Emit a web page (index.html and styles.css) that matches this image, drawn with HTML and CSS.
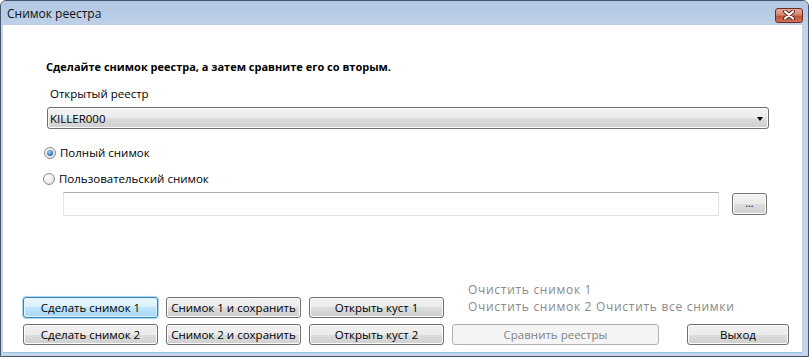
FILE: index.html
```html
<!DOCTYPE html>
<html>
<head>
    <title>Снимок реестра</title>
    <link rel="stylesheet" href="styles.css">
</head>
<body>
    <div class="window">
        <div class="titlebar">
            <span class="title">Снимок реестра</span>
            <span class="close">
                <svg width="14" height="10" viewBox="0 0 14 10">
                    <path d="M3 1.5 L11 8.5 M11 1.5 L3 8.5" stroke="#5a2318" stroke-width="4" stroke-linecap="round"/>
                    <path d="M3 1.5 L11 8.5 M11 1.5 L3 8.5" stroke="#ffffff" stroke-width="2.2" stroke-linecap="round"/>
                </svg>
            </span>
        </div>
        <div class="client">
            <div class="intro">Сделайте снимок реестра, а затем сравните его со вторым.</div>
            <div class="label">Открытый реестр</div>
            <div class="combo">
                <span>KILLER000</span>
                <span class="arrow"></span>
            </div>
            <div class="radio-row first"><span class="radio checked"></span>Полный снимок</div>
            <div class="radio-row second"><span class="radio"></span>Пользовательский снимок</div>
            <div class="path-row">
                <div class="textbox"></div>
                <div class="btn browse">...</div>
            </div>
            <div class="spacer"></div>
            <div class="bottom">
                <div class="btn-grid">
                    <div class="btn focused">Сделать снимок 1</div>
                    <div class="btn">Снимок 1 и сохранить</div>
                    <div class="btn">Открыть куст 1</div>
                    <div class="btn">Сделать снимок 2</div>
                    <div class="btn">Снимок 2 и сохранить</div>
                    <div class="btn">Открыть куст 2</div>
                </div>
                <div class="right-col">
                    <div class="links">
                        <div>Очистить снимок 1</div>
                        <div>Очистить снимок 2 Очистить все снимки</div>
                    </div>
                    <div class="final-row">
                        <div class="btn compare disabled">Сравнить реестры</div>
                        <div class="btn exit">Выход</div>
                    </div>
                </div>
            </div>
        </div>
    </div>
</body>
</html>
```

FILE: styles.css
```css
body{
    margin: 0;
    font-family: "Open Sans", "Noto Sans", sans-serif;
    font-size: 11.5px;
    color: #000;
}
.window{
    width: 809px;
    height: 357px;
    box-sizing: border-box;
    border: 1px solid #44566b;
    border-radius: 6px 6px 0 0;
    background: #c4d5eb;
    padding: 0 6px 3px 2px;
    display: flex;
    flex-direction: column;
}
.titlebar{
    height: 24px;
    display: flex;
    align-items: center;
    background: linear-gradient(to bottom, #b3c7e2, #bfd1e9);
    margin: 0 -6px 0 -2px;
    padding: 0 6px 0 6px;
    border-radius: 5px 5px 0 0;
}
.title{
    flex: 1;
    font-size: 12px;
    color: #111;
}
.close{
    width: 28px;
    height: 15px;
    margin-top: 4px;
    margin-right: -1px;
    box-sizing: border-box;
    border: 1px solid #6b2b20;
    border-radius: 3px;
    background: linear-gradient(to bottom, #e8a899 0%, #d88672 45%, #c2503a 55%, #d2735c 100%);
    display: flex;
    align-items: center;
    justify-content: center;
}
.client{
    flex: 1;
    background: #fff;
    border-bottom: 1px solid #8cc8df;
    display: flex;
    flex-direction: column;
    padding-bottom: 7px;
}
.intro{
    margin: 34px 0 0 43px;
    font-weight: bold;
    font-size: 11px;
    line-height: 16px;
}
.label{
    margin: 11px 0 0 47px;
    line-height: 16px;
}
.combo{
    margin: 5px 0 0 44px;
    width: 722px;
    height: 22px;
    box-sizing: border-box;
    border: 1px solid #707070;
    border-radius: 3px;
    background: linear-gradient(to bottom, #f3f3f3 0%, #ebebeb 50%, #dddddd 50%, #cfcfcf 100%);
    box-shadow: inset 0 0 0 1px #fbfbfb;
    display: flex;
    align-items: center;
    justify-content: space-between;
    padding: 0 5px 0 2px;
}
.arrow{
    width: 0;
    height: 0;
    border-left: 3.5px solid transparent;
    border-right: 3.5px solid transparent;
    border-top: 4px solid #000;
    margin-top: 1px;
}
.radio-row{
    display: flex;
    align-items: center;
    line-height: 16px;
}
.radio-row.first{
    margin: 16px 0 0 41px;
}
.radio-row.second{
    margin: 10px 0 0 40px;
}
.radio{
    width: 12px;
    height: 12px;
    box-sizing: border-box;
    border-radius: 50%;
    border: 1px solid #8a8f94;
    background: radial-gradient(circle at 40% 35%, #ffffff 0%, #e8e8e8 60%, #cfcfcf 100%);
    margin-right: 4px;
    display: flex;
    align-items: center;
    justify-content: center;
}
.radio.checked::after{
    content: "";
    width: 6px;
    height: 6px;
    border-radius: 50%;
    background: radial-gradient(circle at 40% 35%, #a9d4f5 0%, #3a7fc0 55%, #1d4f86 100%);
}
.path-row{
    margin: 5px 0 0 60px;
    display: flex;
    align-items: center;
}
.textbox{
    width: 656px;
    height: 24px;
    box-sizing: border-box;
    border: 1px solid #dde2e8;
    border-top-color: #abadb3;
    border-left-color: #e2e3ea;
}
.btn{
    height: 21px;
    box-sizing: border-box;
    border: 1px solid #707070;
    border-radius: 3px;
    background: linear-gradient(to bottom, #f2f2f2 0%, #ebebeb 50%, #dddddd 50%, #cfcfcf 100%);
    box-shadow: inset 0 0 0 1px #fcfcfc;
    display: flex;
    align-items: center;
    justify-content: center;
    white-space: nowrap;
}
.browse{
    width: 35px;
    height: 22px;
    margin-left: 13px;
    font-size: 10px;
    padding-bottom: 3px;
}
.spacer{
    flex: 1;
}
.bottom{
    display: flex;
    align-items: flex-end;
    margin-left: 20px;
}
.btn-grid{
    display: grid;
    grid-template-columns: 135px 135px 135px;
    column-gap: 8px;
    row-gap: 6px;
}
.btn.focused{
    border-color: #3c7fb1;
    background: linear-gradient(to bottom, #eaf6fd 0%, #d9f0fc 50%, #bee6fd 50%, #a7d9f5 100%);
    box-shadow: inset 0 0 0 1px #e6f6ff, 0 0 1px 1px #a6d8f0;
}
.right-col{
    margin-left: 8px;
    display: flex;
    flex-direction: column;
}
.links{
    padding-left: 16px;
    font-size: 12px;
    letter-spacing: 0.7px;
    line-height: 17px;
    color: #8a8a8a;
    margin-bottom: 9px;
}
.final-row{
    display: flex;
}
.compare{
    width: 207px;
}
.btn.disabled{
    border-color: #adb2b5;
    background: #f4f4f4;
    box-shadow: none;
    color: #838383;
}
.exit{
    width: 102px;
    margin-left: 28px;
}
```
